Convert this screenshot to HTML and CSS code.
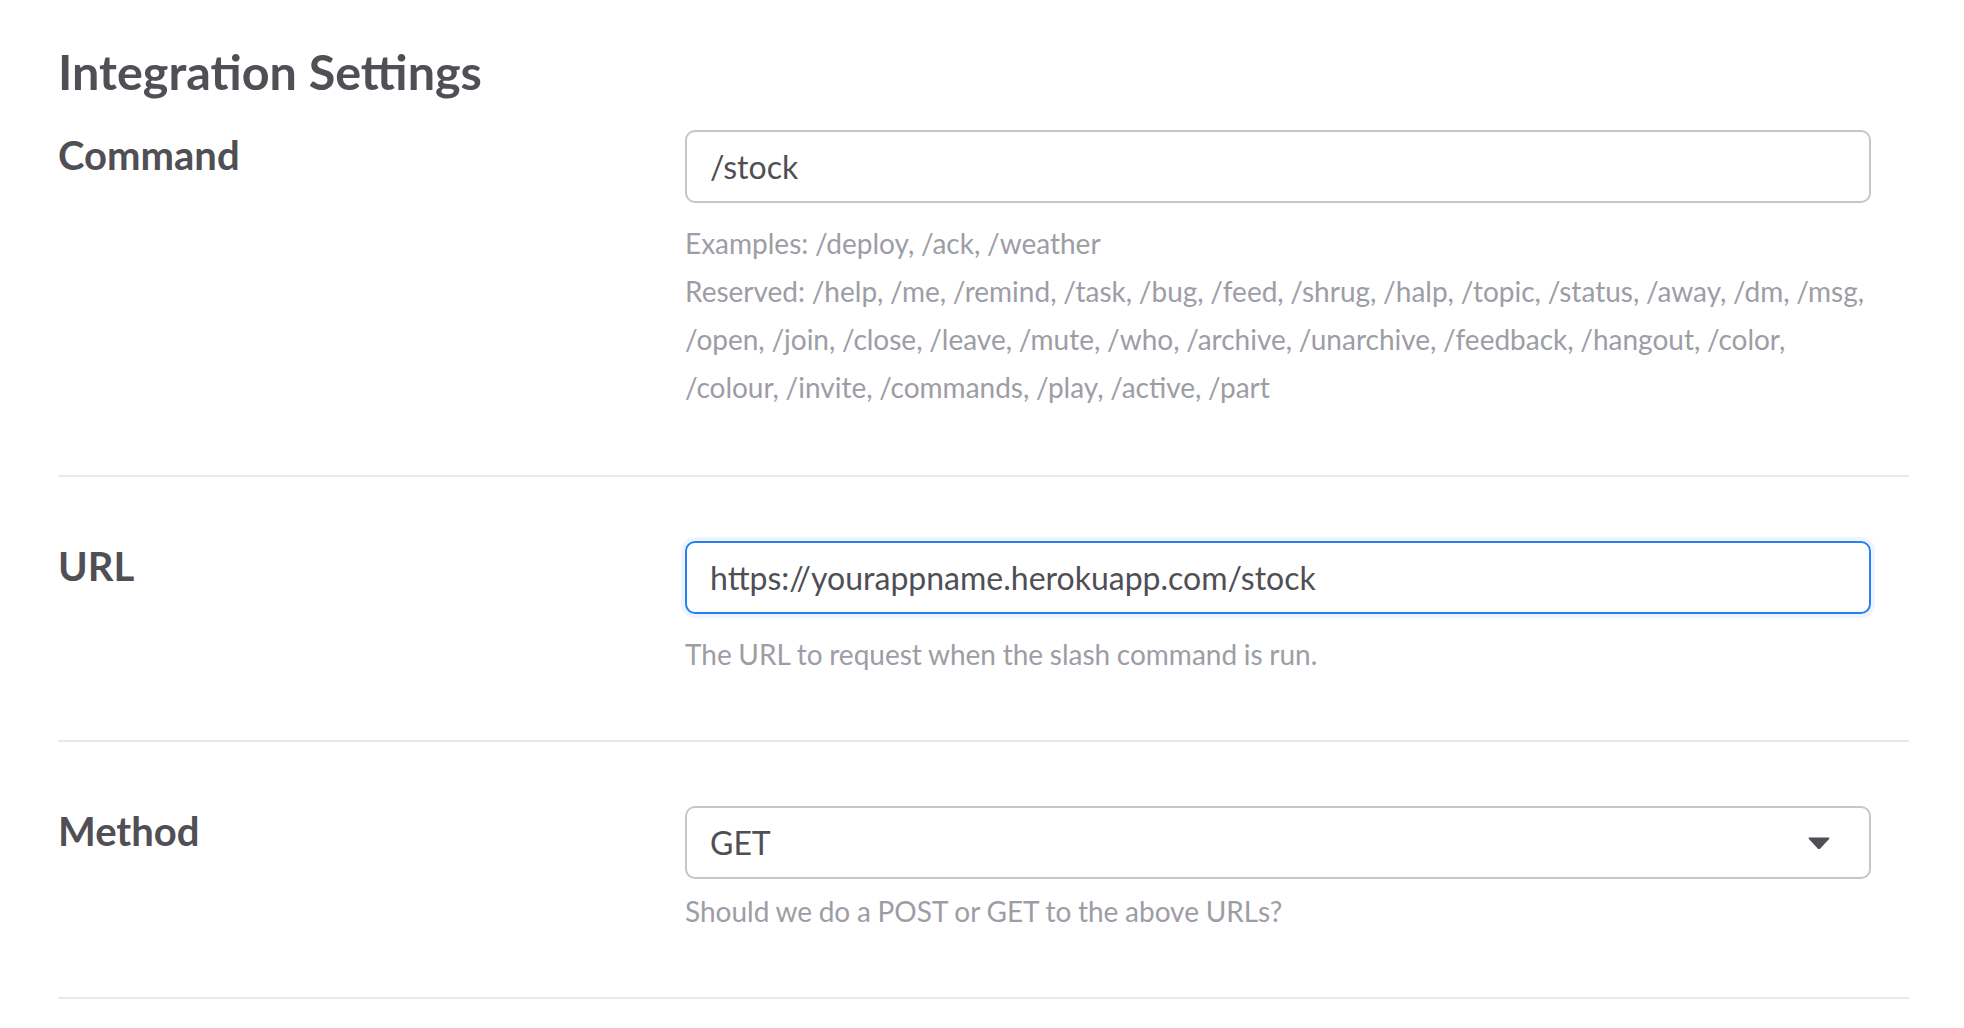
FILE: index.html
```html
<!DOCTYPE html>
<html lang="en">
<head>
<meta charset="utf-8">
<title>Integration Settings</title>
<link rel="stylesheet" href="styles.css">
</head>
<body>
<main class="page">
  <h1 class="title">Integration Settings</h1>

  <section class="field field-first">
    <label class="label" for="cmd">Command</label>
    <div class="control">
      <input id="cmd" class="input" type="text" value="/stock">
      <p class="help">Examples: /deploy, /ack, /weather<br>Reserved: /help, /me, /remind, /task, /bug, /feed, /shrug, /halp, /topic, /status, /away, /dm, /msg, /open, /join, /close, /leave, /mute, /who, /archive, /unarchive, /feedback, /hangout, /color, /colour, /invite, /commands, /play, /active, /part</p>
    </div>
  </section>

  <section class="field">
    <label class="label" for="url">URL</label>
    <div class="control">
      <input id="url" class="input input-focus" type="text" value="https://yourappname.herokuapp.com/stock">
      <p class="help">The URL to request when the slash command is run.</p>
    </div>
  </section>

  <section class="field">
    <label class="label">Method</label>
    <div class="control">
      <div class="select">
        <span class="select-value">GET</span>
        <svg class="caret" width="24" height="14" viewBox="0 0 24 14" aria-hidden="true"><path d="M2.5 1.5 H21.5 Q23.2 1.5 22.1 2.9 L13.3 12.4 Q12 13.7 10.7 12.4 L1.9 2.9 Q0.8 1.5 2.5 1.5 Z" fill="#4f4f55"/></svg>
      </div>
      <p class="help help-tight">Should we do a POST or GET to the above URLs?</p>
    </div>
  </section>
</main>
</body>
</html>
```

FILE: styles.css
```css
html, body {
  margin: 0;
  padding: 0;
  background: #ffffff;
}

body {
  font-family: Lato, "Open Sans", "Liberation Sans", sans-serif;
  color: #4f4f55;
}

.page {
  width: 1851px;
  padding: 42px 0 0 58px;
}

.title {
  margin: 0;
  font-size: 48.5px;
  line-height: 58px;
  font-weight: 700;
  color: #4f4f55;
}

.field {
  display: grid;
  grid-template-columns: 627px 1186px;
  padding: 64px 0 62px 0;
  border-bottom: 2px solid #e8e8e8;
}

.field-first {
  padding-top: 30px;
  padding-bottom: 64px;
}

.label {
  font-size: 40px;
  line-height: 50px;
  font-weight: 700;
  color: #4f4f55;
}

.control {
  display: flex;
  flex-direction: column;
}

.input {
  box-sizing: border-box;
  width: 100%;
  height: 73px;
  margin: 0;
  padding: 0 23px;
  border: 2px solid #c6c6c6;
  border-radius: 10px;
  background: #fff;
  font-family: Lato, "Open Sans", "Liberation Sans", sans-serif;
  font-size: 32px;
  color: #4f4f55;
  outline: none;
}

.input-focus {
  border-color: #2580f2;
  box-shadow: 0 0 0 4px rgba(37, 128, 242, 0.08);
}

.help {
  margin: 16px 0 0 0;
  font-size: 28px;
  line-height: 48px;
  word-spacing: -0.5px;
  color: #9d9da5;
}

.help-tight {
  margin-top: 8px;
}

.select {
  box-sizing: border-box;
  height: 73px;
  display: flex;
  align-items: center;
  justify-content: space-between;
  padding: 0 38px 0 23px;
  border: 2px solid #c6c6c6;
  border-radius: 10px;
  background: #fff;
}

.select-value {
  font-size: 32px;
  color: #4f4f55;
}

.caret {
  display: block;
}
```
